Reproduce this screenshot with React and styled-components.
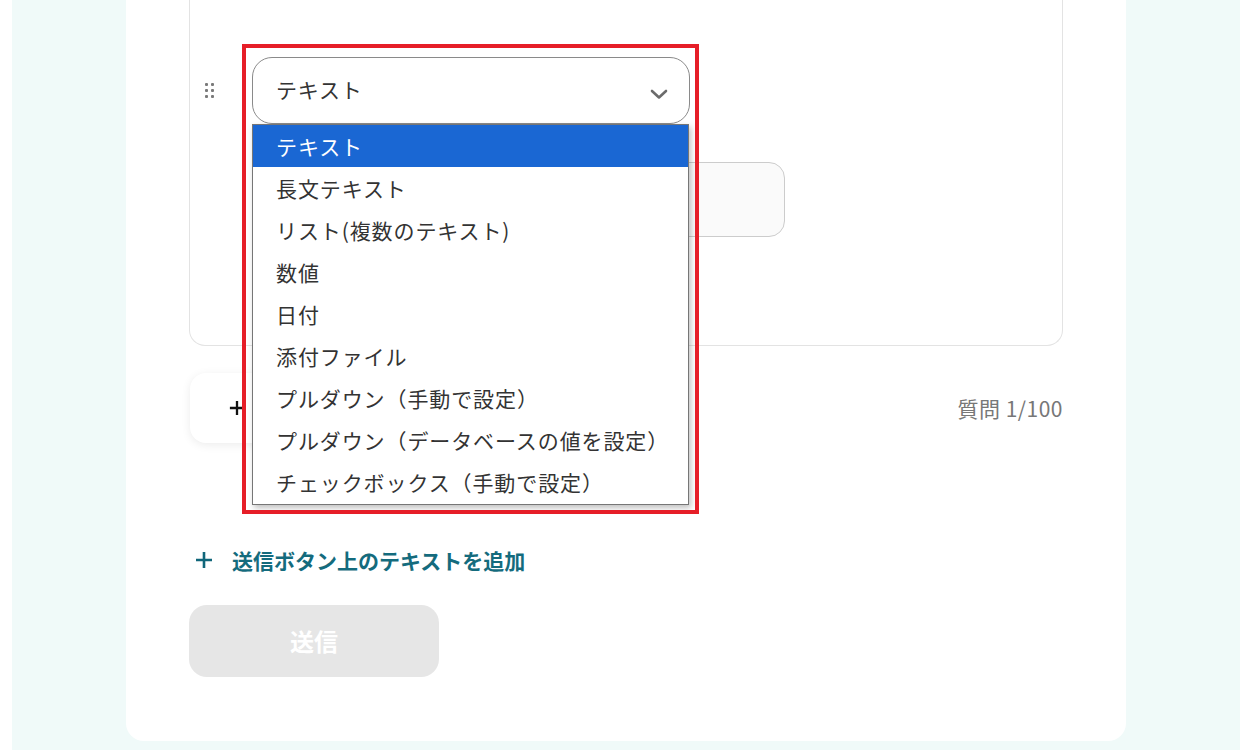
import React from 'react'
import styled, { createGlobalStyle } from 'styled-components'

const GlobalStyle = createGlobalStyle`
  body {
    margin: 0;
    background: #ffffff;
    font-family: "Noto Sans CJK JP", "Noto Sans", sans-serif;
    color: #333333;
  }
`

const Page = styled.div`
  display: flex;
  height: 750px;
  overflow: hidden;
  padding: 0 11px 0 12px;
  box-sizing: border-box;
`

const Backdrop = styled.div`
  flex: 1;
  background: #f0faf9;
  padding: 0 114px 9px;
  display: flex;
`

const Card = styled.div`
  flex: 1;
  background: #ffffff;
  border-radius: 0 0 18px 18px;
  padding: 0 63px 64px;
  display: flex;
  flex-direction: column;
`

const QuestionCard = styled.div`
  border: 1px solid #e3e3e3;
  border-top: none;
  border-radius: 0 0 16px 16px;
  padding: 57px 0 108px 15px;
  display: flex;
  flex-direction: column;
  gap: 38px;
`

const FieldRow = styled.div`
  display: flex;
  align-items: center;
  gap: 38px;
`

const Handle = styled.div`
  display: grid;
  grid-template-columns: repeat(2, 3px);
  grid-auto-rows: 3px;
  column-gap: 3px;
  row-gap: 3px;
  span {
    background: #7a7a7a;
    border-radius: 1px;
  }
`

const SelectWrap = styled.div`
  position: relative;
  width: 438px;
`

const SelectBox = styled.div`
  height: 67px;
  box-sizing: border-box;
  border: 1px solid #8a8a8a;
  border-radius: 20px;
  display: flex;
  align-items: center;
  justify-content: space-between;
  padding: 0 20px 3px 23px;
  font-size: 21px;
  letter-spacing: 0.8px;
  color: #333333;
  svg {
    margin-top: 9px;
  }
`

const Highlight = styled.div`
  position: absolute;
  left: -10px;
  top: -13px;
  width: 457px;
  height: 470px;
  box-sizing: border-box;
  border: 4px solid #e61e28;
  pointer-events: none;
  z-index: 3;
`

const Menu = styled.ul`
  position: absolute;
  left: 0;
  top: 67px;
  width: 437px;
  margin: 0;
  padding: 0 0 1px;
  list-style: none;
  background: #ffffff;
  border: 1px solid #767676;
  box-sizing: border-box;
  box-shadow: 2px 3px 6px rgba(0, 0, 0, 0.25);
  z-index: 2;
`

const MenuItem = styled.li`
  height: 42px;
  display: flex;
  align-items: center;
  padding-left: 23px;
  font-size: 21px;
  letter-spacing: 0.9px;
  color: ${p => (p.$active ? '#ffffff' : '#333333')};
  background: ${p => (p.$active ? '#1a67d3' : 'transparent')};
`

const InputBox = styled.div`
  margin-left: 48px;
  width: 532px;
  height: 75px;
  box-sizing: border-box;
  background: #fafafa;
  border: 1px solid #cccccc;
  border-radius: 16px;
`

const AddRow = styled.div`
  margin-top: 27px;
  display: flex;
  align-items: center;
  justify-content: space-between;
`

const AddQuestion = styled.button`
  margin-left: 1px;
  width: 230px;
  height: 70px;
  border: none;
  background: #ffffff;
  border-radius: 16px;
  box-shadow: 0 2px 10px rgba(0, 0, 0, 0.08);
  display: flex;
  align-items: center;
  gap: 10px;
  padding: 0 0 0 39px;
  font-family: inherit;
  font-size: 20px;
  font-weight: 700;
  color: #222222;
`

const Counter = styled.div`
  font-size: 21px;
  letter-spacing: 0.5px;
  color: #777777;
`

const TextLink = styled.div`
  margin-top: 102px;
  display: flex;
  align-items: center;
  gap: 19px;
  padding-left: 6px;
  font-size: 21px;
  font-weight: 700;
  color: #146b7d;
`

const SubmitButton = styled.button`
  margin-top: 30px;
  width: 250px;
  height: 72px;
  border: none;
  border-radius: 18px;
  background: #e6e6e6;
  color: #ffffff;
  font-family: inherit;
  font-size: 24px;
  font-weight: 700;
  padding-bottom: 3px;
`

const options = [
  'テキスト',
  '長文テキスト',
  'リスト(複数のテキスト)',
  '数値',
  '日付',
  '添付ファイル',
  'プルダウン（手動で設定）',
  'プルダウン（データベースの値を設定）',
  'チェックボックス（手動で設定）',
]

const Chevron = () => (
  <svg width="20" height="20" viewBox="0 0 20 20" fill="none">
    <path d="M3 7l7 6.5L17 7" stroke="#6b6b6b" strokeWidth="2.6" strokeLinecap="round" strokeLinejoin="round" />
  </svg>
)

const Plus = ({ color, size }) => (
  <svg width={size} height={size} viewBox="0 0 18 18" fill="none">
    <path d="M9 1v16M1 9h16" stroke={color} strokeWidth="2.6" />
  </svg>
)

const App = () => (
  <>
    <GlobalStyle />
    <Page>
      <Backdrop>
        <Card>
          <QuestionCard>
            <FieldRow>
              <Handle>
                {[0, 1, 2, 3, 4, 5].map(i => <span key={i} />)}
              </Handle>
              <SelectWrap>
                <SelectBox>
                  テキスト
                  <Chevron />
                </SelectBox>
                <Menu>
                  {options.map((o, i) => (
                    <MenuItem key={o} $active={i === 0}>{o}</MenuItem>
                  ))}
                </Menu>
                <Highlight />
              </SelectWrap>
            </FieldRow>
            <InputBox />
          </QuestionCard>
          <AddRow>
            <AddQuestion>
              <Plus color="#111111" size={16} />
              質問を追加
            </AddQuestion>
            <Counter>質問 1/100</Counter>
          </AddRow>
          <TextLink>
            <Plus color="#10667a" size={18} />
            送信ボタン上のテキストを追加
          </TextLink>
          <SubmitButton>送信</SubmitButton>
        </Card>
      </Backdrop>
    </Page>
  </>
)

export default App
